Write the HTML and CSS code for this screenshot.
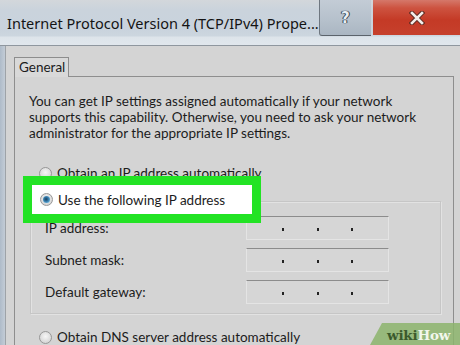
FILE: index.html
```html
<!DOCTYPE html>
<html>
<head>
<meta charset="utf-8">
<link rel="stylesheet" href="styles.css">
</head>
<body>
<div class="screen">
  <div class="titlebar">
    <div class="title">Internet Protocol Version 4 (TCP/IPv4) Prope...</div>
    <div class="btn-help">?</div>
    <div class="btn-close">
      <svg width="16" height="14" viewBox="0 0 16 14">
        <path d="M3 2 L13 12 M13 2 L3 12" stroke="#5a2a22" stroke-width="4.5" stroke-linecap="square"/>
        <path d="M3 2 L13 12 M13 2 L3 12" stroke="#f4eeea" stroke-width="2.6" stroke-linecap="square"/>
      </svg>
    </div>
  </div>
  <div class="main">
    <div class="edge"></div>
    <div class="content">
      <div class="tabs"><div class="tab">General</div></div>
      <div class="panel">
        <div class="intro">
          <div>You can get IP settings assigned automatically if your network</div>
          <div>supports this capability. Otherwise, you need to ask your network</div>
          <div>administrator for the appropriate IP settings.</div>
        </div>
        <div class="radio-row first"><span class="radio"></span><span>Obtain an IP address automatically</span></div>
        <div class="group">
          <div class="highlight"><span class="radio checked"></span><span>Use the following IP address</span></div>
          <div class="fields">
            <div class="label">IP address:</div>
            <div class="ipbox"><i></i><i></i><i></i></div>
            <div class="label">Subnet mask:</div>
            <div class="ipbox"><i></i><i></i><i></i></div>
            <div class="label">Default gateway:</div>
            <div class="ipbox"><i></i><i></i><i></i></div>
          </div>
        </div>
        <div class="radio-row dns"><span class="radio"></span><span>Obtain DNS server address automatically</span></div>
      </div>
    </div>
  </div>
  <div class="wikihow"><span class="wiki">wiki</span><span class="how">How</span></div>
</div>
</body>
</html>
```
FILE: styles.css
```css
html, body {
  margin: 0;
  padding: 0;
}
body {
  width: 460px;
  height: 345px;
  overflow: hidden;
  background: #d4d4d4;
  font-family: "Lato", "Noto Sans", sans-serif;
  color: #1c1c1c;
}
.screen {
  position: relative;
  width: 460px;
  height: 345px;
  display: flex;
  flex-direction: column;
}
.titlebar {
  height: 45px;
  flex: none;
  display: flex;
  align-items: flex-start;
  border-bottom: 1px solid #8f979f;
  background: linear-gradient(#d3d7db 0px, #cad3dc 10px, #c9d3dd 30px, #ccd6df 36px, #dde4ea 37px, #e1e7ed 45px);
}
.title {
  flex: 1;
  padding: 12px 0 0 7px;
  font-family: "Noto Sans", sans-serif;
  font-size: 14.5px;
  line-height: 22px;
  color: #141414;
  white-space: nowrap;
}
.btn-help {
  width: 53px;
  height: 36px;
  box-sizing: border-box;
  border-left: 1px solid #6f7780;
  border-bottom: 1px solid #5b636b;
  border-radius: 0 0 0 3px;
  background: linear-gradient(#c3ccd6, #b5c0cb 60%, #aab6c2);
  display: flex;
  align-items: center;
  justify-content: center;
  font-family: "DejaVu Sans", sans-serif;
  font-weight: bold;
  font-size: 15px;
  color: #e8eef4;
  text-shadow: 0 0 1px #2b3a4a, 0 0 1px #2b3a4a, 1px 0 0 #3d4b5a, -1px 0 0 #3d4b5a;
  margin-right: 2px;
}
.btn-close {
  width: 88px;
  height: 35px;
  background: linear-gradient(#d5786a 0px, #cd5340 8px, #c43a26 20px, #c6402c 35px);
  display: flex;
  align-items: center;
  justify-content: center;
}
.main {
  flex: 1;
  display: flex;
  min-height: 0;
}
.edge {
  width: 5px;
  flex: none;
  border-right: 1px solid #9ea3a8;
  background: linear-gradient(90deg, #aebbc9, #c3ccd6);
}
.content {
  flex: 1;
  padding: 11px 0 0 8px;
  display: flex;
  flex-direction: column;
}
.tabs {
  display: flex;
}
.tab {
  width: 55px;
  height: 20px;
  box-sizing: border-box;
  border: 1px solid #8d8d8d;
  border-bottom: none;
  background: #d9d9d9;
  font-size: 13.5px;
  line-height: 19px;
  padding-left: 4px;
  margin-bottom: -1px;
  position: relative;
  z-index: 1;
}
.panel {
  width: 440px;
  flex: 1;
  box-sizing: border-box;
  border: 1px solid #8e8e8e;
  border-bottom: none;
  background: #d4d4d4;
}
.intro {
  margin: 16px 0 0 14px;
  font-size: 13.5px;
  line-height: 16px;
  white-space: nowrap;
}
.radio-row {
  display: flex;
  align-items: center;
  height: 16px;
  font-size: 13.5px;
  margin-left: 24px;
  white-space: nowrap;
}
.radio-row.first {
  margin-top: 24px;
}
.radio-row.dns {
  margin-top: 15px;
}
.radio {
  width: 13px;
  height: 13px;
  box-sizing: border-box;
  border-radius: 50%;
  border: 1px solid #979797;
  background: radial-gradient(circle at 50% 40%, #f6f6f6, #d8d8d8 70%, #c9c9c9);
  margin-right: 5px;
  flex: none;
  position: relative;
}
.radio.checked::after {
  content: "";
  position: absolute;
  left: 2px;
  top: 2px;
  width: 7px;
  height: 7px;
  border-radius: 50%;
  background: radial-gradient(circle at 45% 45%, #1a3f5c 0, #2f6f9c 35%, #6ab8e4 80%);
}
.group {
  position: relative;
  margin: 20px 12px 0 15px;
  border: 1px solid #c6c6c6;
  box-shadow: inset 1px 1px 0 #e2e2e2, 1px 1px 0 #e2e2e2;
  padding: 14px 0 9px 14px;
}
.highlight {
  position: absolute;
  left: -8px;
  top: -26px;
  width: 238px;
  height: 47px;
  box-sizing: border-box;
  border: 9px solid #22e324;
  background: #ffffff;
  display: flex;
  align-items: center;
  padding-left: 8px;
  font-size: 13.5px;
  white-space: nowrap;
}
.fields {
  display: grid;
  grid-template-columns: 201px 143px;
  grid-auto-rows: 24px;
  row-gap: 8px;
  align-items: center;
}
.label {
  font-size: 13.5px;
}
.ipbox {
  height: 24px;
  box-sizing: border-box;
  border: 1px solid #e4e4e4;
  border-top: 1px solid #8c8c8c;
  background: #d6d6d6;
  display: flex;
  align-items: center;
  justify-content: space-evenly;
  padding: 0 2px;
}
.ipbox i {
  width: 2px;
  height: 3px;
  background: #222;
  margin-top: 2px;
}
.wikihow {
  position: absolute;
  right: 0;
  bottom: 0;
  width: 90px;
  height: 22px;
  background: rgba(140, 180, 108, 0.85);
  clip-path: polygon(12px 0, 100% 0, 100% 100%, 0 100%);
  box-sizing: border-box;
  padding-left: 17px;
  font-family: "DejaVu Serif", serif;
  font-weight: bold;
  font-size: 13.5px;
  line-height: 24px;
  letter-spacing: -0.2px;
}
.wiki {
  color: #3b5a2c;
}
.how {
  color: #f2f7ec;
}
```
